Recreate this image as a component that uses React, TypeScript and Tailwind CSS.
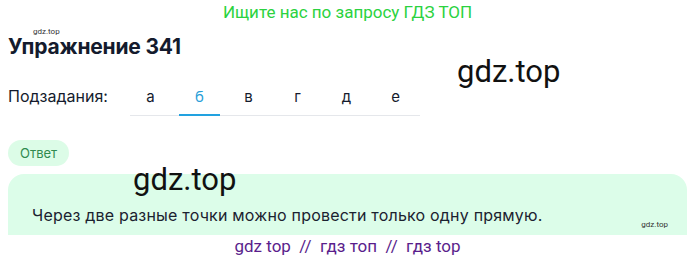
import React from 'react';

const tabs = ['а', 'б', 'в', 'г', 'д', 'е'];

export default function App() {
  const active = 1;

  return (
    <div className="relative w-[695px] h-[262px] overflow-hidden bg-white font-['Inter',sans-serif] text-[#141b2d]">
      <div className="pt-[2px] text-center font-['Roboto',sans-serif] text-[17px] leading-[20px] text-[#2bd240]">
        Ищите нас по запросу ГДЗ ТОП
      </div>

      <div className="relative px-2 pt-[12px]">
        <span className="absolute left-[33px] top-[6px] font-['Roboto',sans-serif] text-[8px] leading-none text-[#333]">gdz.top</span>
        <h1 className="text-[21px] leading-[26px] font-bold tracking-[-0.2px]">Упражнение 341</h1>
        <span className="absolute left-[457px] top-[34px] font-['Roboto',sans-serif] text-[31px] leading-none text-[#111]">gdz.top</span>
      </div>

      <div className="flex items-start px-2 mt-[26px]">
        <span className="text-[16px] leading-[20px] w-[122px]">Подзадания:</span>
        <div className="flex border-b border-[#e5e7eb] mt-px">
          {tabs.map((t, i) => (
            <div
              key={t}
              className={`w-[41px] mx-[4px] first:ml-[0px] pb-[7px] text-center text-[15px] leading-[20px] ${
                i === active ? 'text-[#2a9fd8] border-b-2 border-[#22a2e0] -mb-px' : 'text-[#141b2d]'
              }`}
            >
              {t}
            </div>
          ))}
        </div>
      </div>

      <div className="px-2 mt-[24px]">
        <span className="inline-block rounded-full bg-[#dcfce7] px-[12px] py-[4px] text-[13px] leading-[18px] text-[#2f8a4f]">Ответ</span>
      </div>

      <div className="relative mx-2 mt-[8px] h-[61px] rounded-t-[16px] bg-[#dcfde9] pl-[24px] pt-[30px]">
        <p className="text-[16px] leading-[22px] tracking-[0.2px] text-[#1b2230]">Через две разные точки можно провести только одну прямую.</p>
        <span className="absolute right-[19px] top-[47px] font-['Roboto',sans-serif] text-[8px] leading-none text-[#333]">gdz.top</span>
        <span className="absolute left-[125px] top-[-10px] font-['Roboto',sans-serif] text-[31px] leading-none text-[#111]">gdz.top</span>
      </div>

      <div className="pt-[1px] text-center font-['Roboto',sans-serif] text-[17px] leading-[20px] text-[#5a1e8c] whitespace-pre">
        {'gdz top  //  гдз топ  //  гдз top'}
      </div>
    </div>
  );
}
